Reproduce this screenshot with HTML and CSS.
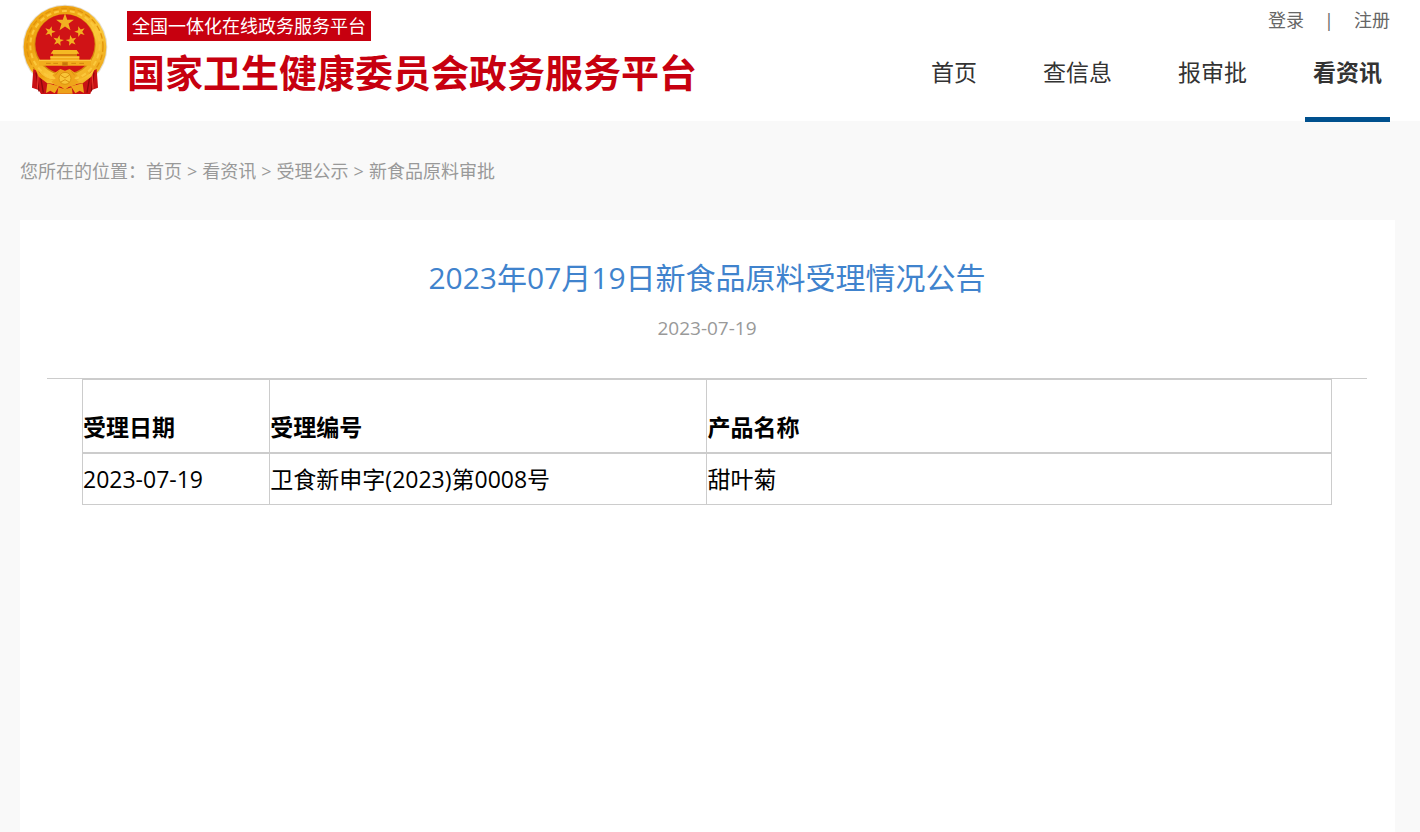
FILE: index.html
```html
<!DOCTYPE html>
<html lang="zh-Hans">
<head>
    <meta charset="UTF-8">
    <meta name="viewport" content="width=device-width, initial-scale=1.0">
    <title>2023年07月19日新食品原料受理情况公告</title>
    <link rel="stylesheet" href="styles.css">
</head>
<body>
    <header class="header">
        <a href="#" class="logo">
            <svg class="emblem" viewBox="36 12 258 276" aria-hidden="true">
                <defs>
                    <linearGradient id="gold" x1="0" y1="0" x2="1" y2="1">
                        <stop offset="0" stop-color="#f6b51d"/>
                        <stop offset="0.3" stop-color="#eda00f"/>
                        <stop offset="0.6" stop-color="#fbc93a"/>
                        <stop offset="1" stop-color="#e8990c"/>
                    </linearGradient>
                    <path id="star" d="M0-10 2.4-3.2 9.5-3.1 3.8 1.2 5.9 8.1 0 4 -5.9 8.1 -3.8 1.2 -9.5-3.1 -2.4-3.2Z"/>
                </defs>
                <circle cx="165" cy="141" r="127" fill="#e3ddd0"/>
                <circle cx="165" cy="141" r="124" fill="url(#gold)"/>
                <!-- 麦穗 -->
                <circle cx="165" cy="139" r="114" fill="none" stroke="#e0930c" stroke-width="4" stroke-dasharray="17 8"/>
                <circle cx="165" cy="137" r="104" fill="none" stroke="#fbc83c" stroke-width="6" stroke-dasharray="15 9"/>
                <circle cx="165" cy="134" r="92" fill="#d58a0d"/>
                <circle cx="165" cy="132" r="89" fill="#d01316"/>
                <!-- 五星 -->
                <g fill="#f2b021">
                    <use href="#star" transform="translate(165 68) scale(2.8)"/>
                    <use href="#star" transform="translate(120 95) rotate(18) scale(1.7)"/>
                    <use href="#star" transform="translate(210 95) rotate(-18) scale(1.7)"/>
                    <use href="#star" transform="translate(145 122) rotate(12) scale(1.7)"/>
                    <use href="#star" transform="translate(184 122) rotate(-12) scale(1.7)"/>
                </g>
                <!-- 天安门 -->
                <path d="M130 150h70l8 11h-7v5h-72v-5h-7Z" fill="#f5b923"/>
                <path d="M129 162h72v8h-72Z" fill="#d47b0d"/>
                <path d="M121 168h87v11h35v18H87v-18h34Z" fill="#f2ac1c"/>
                <path d="M87 181h156M121 172h87" stroke="#fccb48" stroke-width="3"/>
                <path d="M108 190h14M130 190h14M158 187h14v10h-14ZM184 190h14M208 190h14" stroke="#d3820e" stroke-width="3" fill="#c87509"/>
                <!-- 绶带 -->
                <path d="M70 207 87 216 104 235 139 241 190 241 226 235 243 216 260 207 264 263 245 270 241 282 93 282 86 270 66 263Z" fill="#c91115"/>
                <path d="M78 218 87 274M91 226 100 278M240 226 231 278M252 218 244 274" stroke="#8f080b" stroke-width="4"/>
                <path d="M85 216 82 266M246 216 249 266" stroke="#ee3d32" stroke-width="3"/>
                <path d="M75 204Q105 241 142 239L188 239Q225 241 255 204L244 230 219 249 165 257 111 249 86 230Z" fill="url(#gold)"/>
                <path d="M139 215 151 207 165 212 179 207 191 215 203 226 193 235 206 245 195 256 176 261 165 269 154 261 135 256 124 245 137 235 127 226Z" fill="#efa51b"/>
                <circle cx="165" cy="235" r="18" fill="#f9c537" stroke="#dc930f" stroke-width="3"/>
                <path d="M146 213 136 226M184 213 194 226M151 225 165 234 179 225M151 247 165 239 179 247" fill="none" stroke="#dc930f" stroke-width="3"/>
                <path d="M112 250 147 259 134 280 121 272 108 279ZM218 250 183 259 196 280 209 272 222 279Z" fill="#f0a71c"/>
                <path d="M145 262 165 268 185 262 188 281H142Z" fill="#eda11a"/>
            </svg>
            <span class="logo-text">
                <span class="logo-badge">全国一体化在线政务服务平台</span>
                <span class="logo-name">国家卫生健康委员会政务服务平台</span>
            </span>
        </a>
        <div class="header-right">
            <div class="user-links">
                <a href="#">登录</a>
                <span>|</span>
                <a href="#">注册</a>
            </div>
            <nav class="nav">
                <a href="#">首页</a>
                <a href="#">查信息</a>
                <a href="#">报审批</a>
                <a href="#" class="active">看资讯</a>
            </nav>
        </div>
    </header>

    <div class="breadcrumb">
        <span>您所在的位置：</span><a href="#">首页</a><span class="sep">&gt;</span><a href="#">看资讯</a><span class="sep">&gt;</span><a href="#">受理公示</a><span class="sep">&gt;</span><a href="#">新食品原料审批</a>
    </div>

    <main class="content">
        <h1>2023年07月19日新食品原料受理情况公告</h1>
        <p class="date">2023-07-19</p>
        <div class="article">
            <table>
                <thead>
                    <tr>
                        <th class="col-date">受理日期</th>
                        <th class="col-no">受理编号</th>
                        <th>产品名称</th>
                    </tr>
                </thead>
                <tbody>
                    <tr>
                        <td>2023-07-19</td>
                        <td>卫食新申字(2023)第0008号</td>
                        <td>甜叶菊</td>
                    </tr>
                </tbody>
            </table>
        </div>
    </main>
</body>
</html>
```
FILE: styles.css
```css
* {
    box-sizing: border-box;
}
body {
    margin: 0;
    min-height: 100vh;
    display: flex;
    flex-direction: column;
    font-family: "Open Sans", "Noto Sans CJK SC", sans-serif;
    background-color: #f9f9f9;
    color: #000;
}
a {
    color: inherit;
    text-decoration: none;
}
.header {
    display: flex;
    justify-content: space-between;
    height: 121px;
    padding: 0 30px 0 22px;
    background: white;
}
.logo {
    display: flex;
    gap: 19px;
    padding-top: 4px;
    color: #c7000f;
}
.emblem {
    width: 86px;
    height: 92px;
}
.logo-text {
    display: flex;
    flex-direction: column;
    align-items: flex-start;
    padding-top: 7px;
    white-space: nowrap;
}
.logo-badge {
    padding: 0 5px;
    background: #c7000f;
    color: white;
    font-size: 18px;
    line-height: 30px;
}
.logo-name {
    margin-top: 7px;
    font-size: 38px;
    font-weight: bold;
    line-height: 48px;
}
.header-right {
    display: flex;
    flex-direction: column;
    align-items: flex-end;
    white-space: nowrap;
}
.user-links {
    display: flex;
    gap: 20px;
    color: #666;
    font-size: 18px;
    line-height: 40px;
}
.nav {
    display: flex;
    gap: 50px;
    color: #333;
    font-size: 23px;
    line-height: 64px;
}
.nav a {
    height: 82px;
    padding: 0 8px;
}
.nav .active {
    border-bottom: 5px solid #00508e;
    font-weight: bold;
}
.breadcrumb {
    padding: 30px 20px 29px;
    color: #999;
    font-size: 18px;
    line-height: 40px;
}
.breadcrumb .sep {
    margin: 0 5px;
}
.content {
    flex: 1;
    margin: 0 25px 0 20px;
    padding: 38px 28px 40px 27px;
    background: white;
}
h1 {
    margin: 0;
    color: #4083cd;
    font-size: 30px;
    font-weight: normal;
    line-height: 40px;
    text-align: center;
}
.date {
    margin: 15px 0 35px;
    color: #999;
    font-size: 19px;
    line-height: 30px;
    text-align: center;
}
.article {
    padding: 0 35px;
    border-top: 1px solid #ccc;
}
table {
    width: 100%;
    border-collapse: collapse;
    table-layout: fixed;
    font-size: 23px;
    line-height: 32px;
}
th, td {
    border: 1px solid #ccc;
    text-align: left;
}
th {
    padding: 31px 0 9px;
    border-bottom-width: 2px;
}
td {
    padding: 9px 0;
}
.col-date {
    width: 15%;
}
.col-no {
    width: 35%;
}
```
